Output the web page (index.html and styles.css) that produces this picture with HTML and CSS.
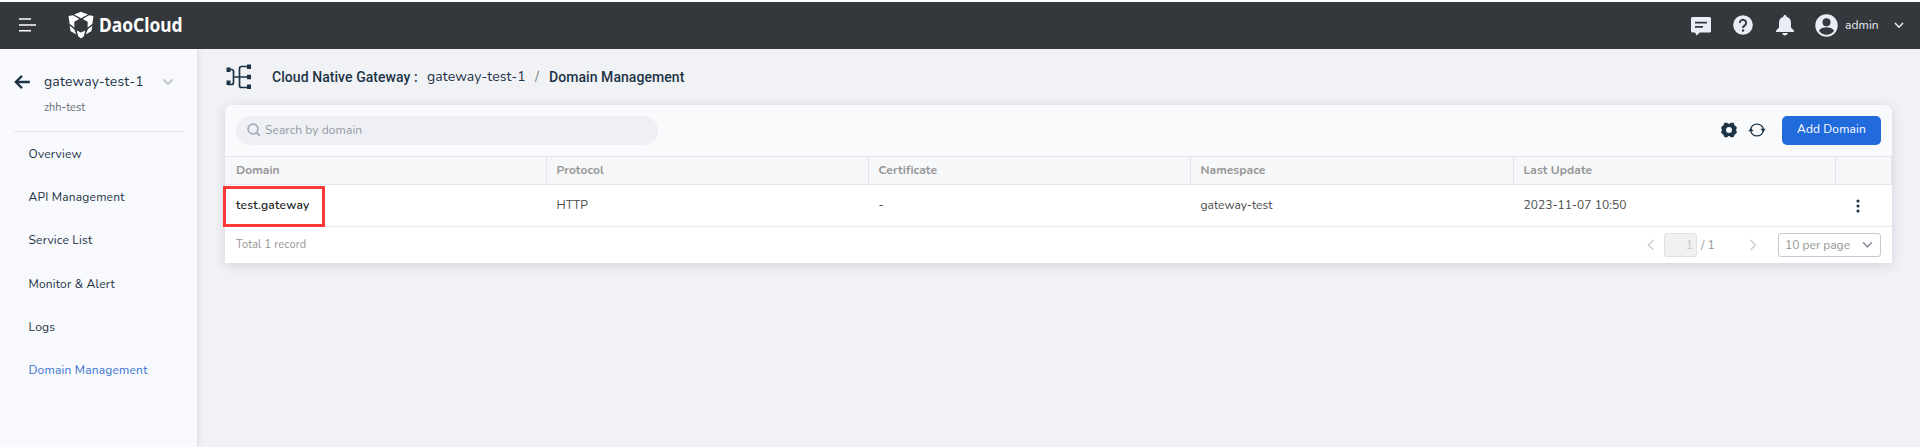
FILE: index.html
```html
<!DOCTYPE html>
<html lang="en">
<head>
<meta charset="utf-8">
<title>DaoCloud - Domain Management</title>
<link rel="stylesheet" href="styles.css">
</head>
<body>
<header class="topbar">
  <svg class="menu-icon" width="18" height="14" viewBox="0 0 18 14" fill="none" stroke="#fff" stroke-width="1.600"><path d="M1 1h12M1 7h17M1 12.800h12"/></svg>
  <svg class="logo" width="28" height="28" viewBox="0 0 28 28" fill="#fff">
    <path d="M7 3.500 14 .8l7 2.700-7 3.700z"/>
    <path d="M1.500 5 6 4.200l6.300 3.900-5 2.700.1 5.700-4.700-3.400z"/>
    <path d="M26.500 5 22 4.200l-6.300 3.900 5 2.700-.1 5.700 4.700-3.400z"/>
    <path d="M2.600 14.800 7 18l2.400 5.400-5.700-3.200zM25.400 14.800 21 18l-2.400 5.400 5.700-3.200z"/>
    <path d="m9.700 19.600 4.300 2 4.300-2-1.500 5.600L14 27.500l-2.800-2.300z"/>
  </svg>
  <span class="brand">DaoCloud</span>
  <div class="top-actions">
    <svg class="chat" width="20" height="19" viewBox="0 0 20 19"><path fill="#e9eef6" d="M1.500 0h17Q20 0 20 1.500v12.500q0 1.500-1.500 1.500H9L5.500 18.500 4 15.500H1.500Q0 15.500 0 14V1.500Q0 0 1.500 0z"/><path d="M4 5.700h12M4 9.900h8" stroke="#34373c" stroke-width="1.700"/></svg>
    <svg class="help" width="20" height="20" viewBox="0 0 20 20"><circle cx="10" cy="10" r="9.800" fill="#e9eef6"/><path d="M6.900 8a3.100 3.100 0 1 1 4.900 2.400C10.600 11.200 10 11.600 10 13" fill="none" stroke="#34373c" stroke-width="1.900"/><circle cx="10" cy="15.600" r="1.250" fill="#34373c"/></svg>
    <svg class="bell" width="20" height="21" viewBox="0 0 20 21" fill="#e9eef6"><path d="M10 0c1 0 1.600.7 1.600 1.700C14.800 2.500 16 5 16 8v4.500l3 3.200v1.200H1v-1.200l3-3.200V8c0-3 1.200-5.500 4.400-6.300C8.400.7 9 0 10 0zM7.200 18h5.600c-.3 1.500-1.300 2.400-2.800 2.400S7.500 19.500 7.200 18z"/></svg>
    <svg class="avatar" width="23" height="23" viewBox="0 0 23 23"><circle cx="11.500" cy="11.500" r="11.200" fill="#e9eef6"/><circle cx="11.500" cy="8.300" r="4" fill="#34373c"/><path d="M4 16.700c1.600-2.400 4.400-3.400 7.500-3.400s5.900 1 7.500 3.400c-1.700 2.500-4.400 4-7.500 4s-5.800-1.500-7.500-4z" fill="#34373c"/></svg>
    <span class="user">admin</span>
    <svg class="caret" width="10" height="7" viewBox="0 0 10 7" fill="none" stroke="#e9eef6" stroke-width="1.600"><path d="m1 1 4 4.200L9 1"/></svg>
  </div>
</header>
<div class="body">
  <aside class="sidebar">
    <div class="side-head">
      <svg width="16" height="14" viewBox="0 0 16 14" fill="none" stroke="#1d3446" stroke-width="2.300"><path d="M15.800 7H2M8 .9 1.800 7 8 13.100"/></svg>
      <span class="gateway">gateway-test-1</span>
      <svg class="side-caret" width="12" height="8" viewBox="0 0 12 8" fill="none" stroke="#b3b9c1" stroke-width="1.600"><path d="m1.500 1.500 4.500 4.500 4.500-4.500"/></svg>
    </div>
    <div class="workspace">zhh-test</div>
    <nav class="nav">
      <a>Overview</a>
      <a>API Management</a>
      <a>Service List</a>
      <a>Monitor &amp; Alert</a>
      <a>Logs</a>
      <a class="active">Domain Management</a>
    </nav>
  </aside>
  <main class="main">
    <div class="crumbs">
      <svg width="27" height="26" viewBox="0 0 27 26"><path d="M3 5.500h3.500q2 0 2 2v11q0 2-2 2H3M8.500 13h15M23 2.500h-6.500q-2 0-2 2v17q0 2 2 2H23" fill="none" stroke="#1d3446" stroke-width="1.700"/><path fill="#1d3446" d="M1.500 3.500h4V8h-4zM1.500 16.500h4V21h-4zM22 .5h4V5h-4zM22 10.700h4v4.500h-4zM22 20.500h4V25h-4z"/></svg>
      <b class="c-product">Cloud Native Gateway :</b>
      <span class="c-name">gateway-test-1</span>
      <span class="c-sep">/</span>
      <b class="c-page">Domain Management</b>
    </div>
    <section class="card">
      <div class="toolbar">
        <div class="search">
          <svg width="14" height="14" viewBox="0 0 14 14" fill="none" stroke="#a4adb8" stroke-width="1.800"><circle cx="6" cy="6" r="4.900"/><path d="m9.500 9.500 3.500 3.500"/></svg>
          <span>Search by domain</span>
        </div>
        <svg class="gear" width="16" height="16" viewBox="0 0 16 16"><path fill="#1d3446" fill-rule="evenodd" d="M3.400.800H6.200Q8 3 9.800.800h2.800q.3 3.200 3.100 4.300v1.600q-1.600 1.300 0 2.600v1.600q-2.800 1.100-3.100 4.300H9.800Q8 13 6.200 15.200H3.400Q3.100 12 .3 10.900V9.300q1.600-1.300 0-2.600V5.100Q3.100 4 3.400.800zM8 5a3 3 0 1 0 0 6 3 3 0 0 0 0-6z"/></svg>
        <svg class="refresh" width="18" height="16" viewBox="0 0 18 16"><path d="M2.600 7.500a6.500 6.500 0 0 1 12.800 0M15.400 8.500a6.500 6.500 0 0 1-12.800 0" fill="none" stroke="#1d3446" stroke-width="1.400"/><path fill="#1d3446" d="M12.300 6.800h5.400L15.200 10zM.3 9.200h5.400L2.800 6z"/></svg>
        <button class="add"><span>Add Domain</span></button>
      </div>
      <div class="row thead">
        <div>Domain</div><div>Protocol</div><div>Certificate</div><div>Namespace</div><div>Last Update</div><div></div>
      </div>
      <div class="row trow">
        <div class="v-domain">test.gateway<i class="highlight"></i></div><div>HTTP</div><div>-</div><div>gateway-test</div><div>2023-11-07 10:50</div>
        <div class="more"><svg width="4" height="14" viewBox="0 0 4 14" fill="#1d3446"><circle cx="2" cy="2" r="1.550"/><circle cx="2" cy="7" r="1.550"/><circle cx="2" cy="12" r="1.550"/></svg></div>
      </div>
      <footer class="foot">
        <span class="total">Total 1 record</span>
        <svg class="prev" width="8" height="12" viewBox="0 0 8 12" fill="none" stroke="#ccd0d6" stroke-width="1.400"><path d="M6.500 1 1.500 6l5 5"/></svg>
        <span class="page">1</span>
        <span class="pages">/ 1</span>
        <svg class="next" width="8" height="12" viewBox="0 0 8 12" fill="none" stroke="#ccd0d6" stroke-width="1.400"><path d="m1.500 1 5 5-5 5"/></svg>
        <span class="size"><span>10 per page</span><svg width="11" height="8" viewBox="0 0 11 8" fill="none" stroke="#8e939b" stroke-width="1.600"><path d="m1 1.200 4.500 4.600L10 1.200"/></svg></span>
      </footer>
    </section>
  </main>
</div>
</body>
</html>
```
FILE: styles.css
```css
* { box-sizing: border-box; }
body { margin: 0; width: 1920px; height: 447px; overflow: hidden; background: #f1f2f6; border-top: 2px solid #fff; font: 12px/16px "Nunito", "Open Sans", sans-serif; color: #4a4a4a; display: flex; flex-direction: column; }
svg { display: block; flex: none; }
span, b, a { white-space: nowrap; }
.topbar { height: 47px; flex: none; background: #34373c; display: flex; align-items: center; padding: 0 0 1px 18px; }
.menu-icon { margin-right: 31px; }
.logo { margin-right: 4px; }
.brand { color: #fff; font: bold 20px/24px "Noto Sans", sans-serif; width: 84px; transform: scaleX(.87); transform-origin: left; padding-bottom: 1px; }
.top-actions { margin-left: auto; display: flex; align-items: center; padding-right: 16px; color: #e9eef6; }
.chat { margin: 3px 22px 0 0; }
.help { margin-right: 22px; }
.bell { margin-right: 20px; }
.avatar { margin-right: 7px; }
.user { width: 49px; letter-spacing: .1px; }
.body { flex: 1; display: flex; }
.sidebar { width: 197px; flex: none; background: #f7f9fd; box-shadow: 1px 0 8px rgba(50, 60, 80, .12); padding: 22px 14px 0; }
.side-head { display: flex; align-items: center; height: 22px; }
.gateway { font-size: 14px; letter-spacing: .15px; color: #1d3446; margin-left: 14px; width: 118px; }
.workspace { font-size: 11px; color: #6b7078; padding: 7px 0 0 30px; height: 39px; border-bottom: 1px solid #e1e4ea; }
.nav { padding: 1px 0 0 14.500px; color: #1d3446; letter-spacing: .19px; display: flex; flex-direction: column; }
.nav a { height: 43.200px; line-height: 43px; }
.nav .active { color: #3b73d1; }
.main { flex: 1; padding: 15px 28px 0; }
.crumbs { height: 25px; display: flex; align-items: center; font-size: 14px; color: #1d3446; }
.crumbs b { font: 500 14px/20px Roboto, sans-serif; letter-spacing: .06px; }
.c-product { margin-left: 20px; width: 155px; }
.c-name { width: 108px; letter-spacing: .08px; }
.c-sep { width: 14px; color: #7d838b; }
.card { margin-top: 16px; width: 1667px; height: 158px; background: #fff; border-radius: 8px 8px 0 0; box-shadow: 0 2px 12px rgba(40, 50, 80, .16); }
.toolbar { height: 51px; background: #f9fafc; border-radius: 8px 8px 0 0; display: flex; align-items: center; padding: 0 11px 1px; }
.search { width: 422px; height: 29px; border-radius: 15px; background: #eef0f5; color: #949aa2; display: flex; align-items: center; padding-left: 11px; gap: 4px; margin-right: auto; letter-spacing: .08px; }
.search span { padding-bottom: 1px; }
.gear { margin-top: -1px; }
.refresh { margin: -1px 16px 0 11px; }
.add { width: 99px; height: 29px; border: 0; border-radius: 5px; background: #226bdc; color: #fff; font: inherit; letter-spacing: .12px; padding: 0 0 2px; }
.row { display: grid; grid-template-columns: 322px 322px 322px 323px 322px 56px; }
.row > div { padding-left: 9.500px; }
.row > div:first-child { padding-left: 11px; }
.thead { height: 29px; border: solid #e2e5ec; border-width: 1px 0; background: #f7f8fa; color: #969696; font-weight: 700; letter-spacing: .07px; line-height: 26px; }
.thead > div { border-right: 1px solid #e2e5ec; }
.trow { height: 42px; border-bottom: 1px solid #ebebee; line-height: 40px; letter-spacing: .03px; }
.v-domain { font-weight: 600; letter-spacing: .25px; color: #222; position: relative; }
.highlight { position: absolute; left: -2px; top: 1px; width: 102px; height: 41px; border: 3px solid #fb3838; }
.row > .more { padding-left: 20px; display: flex; align-items: center; }
.foot { height: 36px; display: flex; align-items: center; padding: 0 11px; color: #949494; }
.total { margin-right: auto; font-size: 11px; letter-spacing: .15px; }
.prev { margin-right: 9px; }
.page { width: 33px; height: 24px; border: 1px solid #dfe1e8; border-radius: 3px; background: #f1f1f1; color: #c4c4c4; line-height: 22px; text-align: right; padding-right: 3px; }
.pages { width: 52px; padding-left: 4px; }
.next { margin-right: 21px; }
.size { width: 103px; height: 24px; border: 1px solid #c5c9d6; border-radius: 3px; display: flex; align-items: center; justify-content: space-between; padding: 0 7px 0 6px; }
```
